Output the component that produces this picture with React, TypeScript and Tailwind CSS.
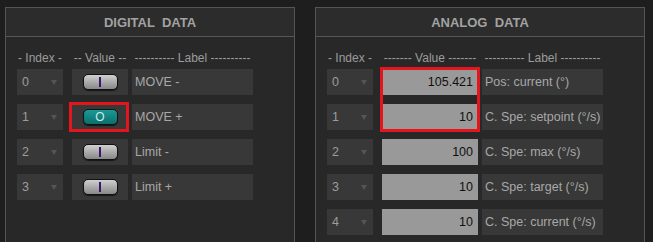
import React from 'react'

const digital = [
  { idx: 0, on: false, label: 'MOVE -' },
  { idx: 1, on: true, label: 'MOVE +' },
  { idx: 2, on: false, label: 'Limit -' },
  { idx: 3, on: false, label: 'Limit +' },
]

const analog = [
  { idx: 0, value: '105.421', label: 'Pos: current (°)' },
  { idx: 1, value: '10', label: 'C. Spe: setpoint (°/s)' },
  { idx: 2, value: '100', label: 'C. Spe: max (°/s)' },
  { idx: 3, value: '10', label: 'C. Spe: target (°/s)' },
  { idx: 4, value: '10', label: 'C. Spe: current (°/s)' },
]

function IndexBox({ n }: { n: number }) {
  return (
    <div className="flex h-[26px] w-[46px] shrink-0 items-center justify-between bg-[#383838] pl-[5px] pr-[6px] text-[12.5px] text-[#9c9c9c]">
      <span>{n}</span>
      <span className="h-0 w-0 border-x-[3.5px] border-t-[5px] border-x-transparent border-t-[#555555]" />
    </div>
  )
}

function Toggle({ on }: { on: boolean }) {
  if (on) {
    return (
      <div className="flex h-[16px] w-[35px] items-center justify-center rounded-[5px] border border-[#0c1414] bg-gradient-to-b from-[#1a9a96] to-[#0d6e6c] text-[12px] leading-none text-[#c8ece8] shadow-[0_1px_1px_rgba(0,0,0,0.6)]">
        O
      </div>
    )
  }
  return (
    <div className="flex h-[16px] w-[35px] items-center justify-center rounded-[5px] border border-[#111111] bg-gradient-to-b from-[#d0d0d0] to-[#888888] shadow-[0_1px_1px_rgba(0,0,0,0.6)]">
      <span className="h-[10px] w-[2px] bg-[#3c1468]" />
    </div>
  )
}

function PanelHead({ title }: { title: string }) {
  return (
    <div className="flex h-[29px] items-center justify-center border-b border-[#555555] bg-[#2c2c2c] text-[13px] font-bold whitespace-pre text-[#a2a2a2]">
      {title}
    </div>
  )
}

export default function App() {
  return (
    <div
      className="flex h-[242px] w-[653px] gap-[20px] overflow-hidden bg-[#1e1e1e] pt-[7px] pl-[5px] text-[12px] leading-none"
      style={{ fontFamily: '"Liberation Sans", Arial, sans-serif' }}
    >
      {/* digital */}
      <div className="h-[260px] w-[290px] shrink-0 border border-[#555555] bg-[#282828]">
        <PanelHead title="DIGITAL  DATA" />
        <div className="pt-[13px] pl-[11px]">
          <div className="mb-[3px] flex h-[16px] items-center text-[#9c9c9c] whitespace-pre">
            <span className="w-[46px] text-center">- Index -</span>
            <span className="ml-[9px] w-[56px] text-center">-- Value --</span>
            <span className="ml-[4px] w-[121px] text-center">---------- Label ----------</span>
          </div>
          <div className="flex flex-col gap-[9px]">
            {digital.map((r) => (
              <div key={r.idx} className="flex">
                <IndexBox n={r.idx} />
                <div className="relative ml-[9px] flex h-[26px] w-[56px] items-center justify-center bg-[#383838]">
                  <Toggle on={r.on} />
                  {r.on && <div className="absolute -top-[2px] -bottom-[2px] -left-[3px] -right-[1px] border-[3px] border-[#e3161e]" />}
                </div>
                <div className="ml-[4px] flex h-[26px] w-[121px] items-center bg-[#383838] pl-[3px] text-[12.5px] whitespace-nowrap text-[#a8a8a8]">
                  {r.label}
                </div>
              </div>
            ))}
          </div>
        </div>
      </div>

      {/* analog */}
      <div className="h-[260px] w-[330px] shrink-0 border border-[#555555] bg-[#282828]">
        <PanelHead title="ANALOG  DATA" />
        <div className="pt-[13px] pl-[11px]">
          <div className="mb-[3px] flex h-[16px] items-center text-[#9c9c9c] whitespace-pre">
            <span className="w-[46px] text-center">- Index -</span>
            <span className="ml-[9px] w-[96px] text-center">------- Value -------</span>
            <span className="ml-[4px] w-[121px] text-center">---------- Label ----------</span>
          </div>
          <div className="relative flex flex-col gap-[9px]">
            {analog.map((r) => (
              <div key={r.idx} className="flex">
                <IndexBox n={r.idx} />
                <div className="ml-[9px] flex h-[26px] w-[96px] items-center justify-end bg-[#999999] pr-[5px] text-[12.5px] text-[#101010]">
                  {r.value}
                </div>
                <div className="ml-[4px] flex h-[26px] w-[121px] items-center overflow-hidden bg-[#383838] pl-[3px] text-[12.5px] whitespace-nowrap text-[#a8a8a8]">
                  {r.label}
                </div>
              </div>
            ))}
            <div className="absolute top-[-2px] left-[53px] h-[65px] w-[100px] border-[3px] border-[#e3161e]" />
          </div>
        </div>
      </div>
    </div>
  )
}
